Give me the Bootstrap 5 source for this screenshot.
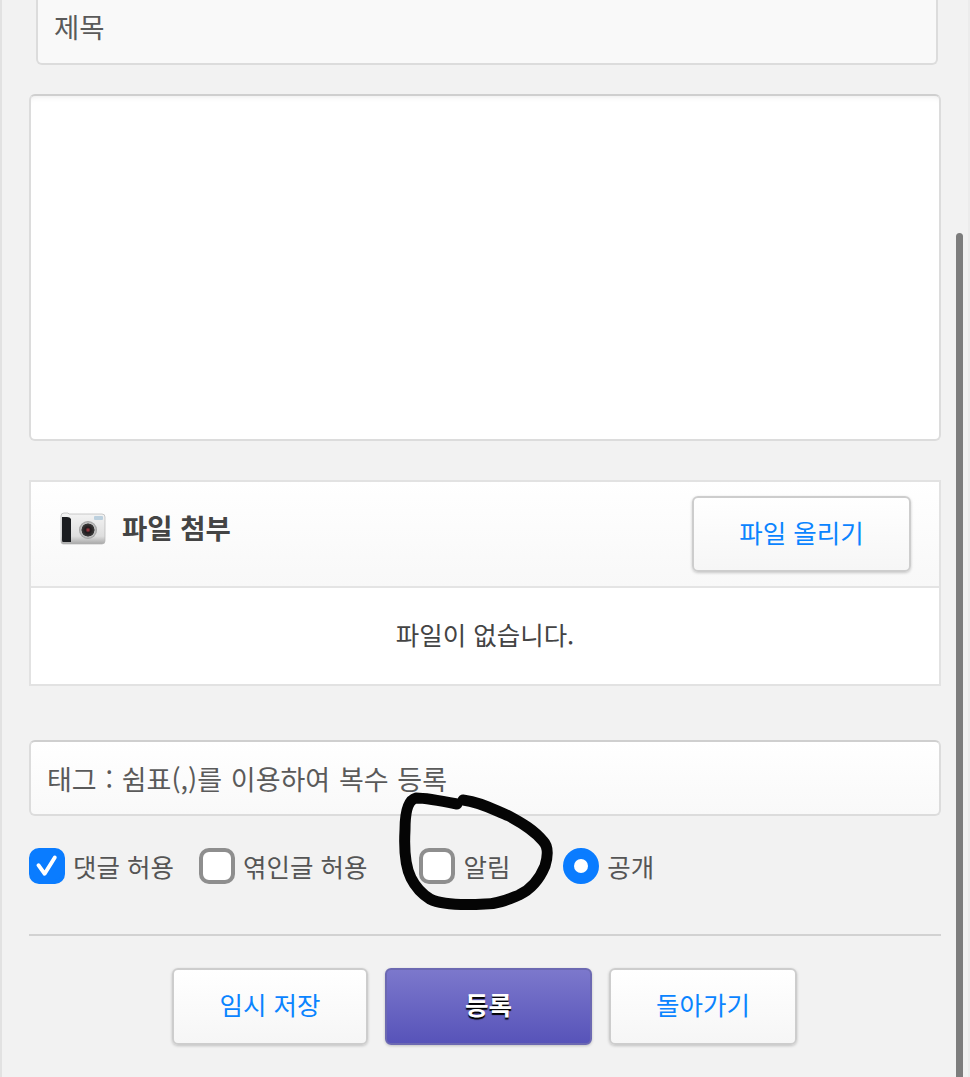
<!DOCTYPE html>
<html lang="ko">
<head>
<meta charset="utf-8">
<title>글쓰기</title>
<link rel="stylesheet" href="https://cdn.jsdelivr.net/npm/bootstrap@5.3.0/dist/css/bootstrap.min.css">
<style>
html,body{height:1077px;overflow:hidden}
body{position:relative;background:#f2f2f2;border-left:2px solid #e2e2e2;border-right:2px solid #ececec;font-family:"Noto Sans CJK KR","Liberation Sans",sans-serif;color:#555;font-size:26px}
.sheet{padding:0 27px}
.field{font-size:27px;background:linear-gradient(#fff,#f9f9f9);border:2px solid #dcdcdc;border-top-color:#cfcfcf;border-radius:6px;color:#555;box-shadow:none}
.field::placeholder{color:#5a5a5a;opacity:1}
.title-field{display:block;width:902px;height:65px;margin-left:7px;padding:0 16px 12px;font-size:27.5px;border-top:0;border-radius:0 0 6px 6px;background:#f9f9f9}
.body-field{display:block;width:912px;height:347px;margin-top:29px;background:#fff;resize:none;box-shadow:inset 0 6px 6px -6px #e6e6e6}
.file-box{width:912px;height:206px;margin-top:39px;background:#fff;border:2px solid #e2e2e2}
.file-head{height:106px;padding:14px 28px 0 29px;background:linear-gradient(#fff,#f8f8f8);border-bottom:2px solid #e4e4e4}
.file-title{font-size:27.5px;font-weight:700;color:#444;height:64px}
.file-empty{height:96px;color:#444;font-size:25.5px;padding-bottom:3px}
.tag-field{display:block;width:912px;height:76px;margin-top:54px;padding:0 16px 0;word-spacing:1.2px;background:linear-gradient(#fff,#f9f9f9)}
.opts{height:38px;margin-top:31px;font-size:25.5px;color:#555}
.opts .form-check-input{width:36px;height:36px;margin:0;float:none;border:4px solid #8e8e8e;border-radius:10px;background-color:#fff}
.opts .form-check-input:checked{background-color:#0a7cff;border-color:#0a7cff}
.opts .form-check-input[type=checkbox]:checked{background-size:100%;background-image:url("data:image/svg+xml,%3csvg xmlns='http://www.w3.org/2000/svg' viewBox='0 0 36 36'%3e%3cpath fill='none' stroke='%23fff' stroke-width='5' stroke-linecap='round' stroke-linejoin='round' d='M7 17l8 11L28 7'/%3e%3c/svg%3e")}
.opts .form-check-input[type=radio]{border-radius:50%;background-size:100%}
.opt{gap:8px}
.opt-a{margin-right:25px}.opt-b{margin-right:52px}.opt-c{margin-right:53px}
.rule{height:2px;margin:49px 0 32px;background:#d2d2d2;border:0;opacity:1;width:912px}
.acts{gap:17px;margin-left:143px}
.act{height:77px;font-size:25.5px;border-radius:6px;padding:0 0 5px;color:#0a84ff;background:linear-gradient(#fff,#f6f6f6);border:2px solid #cdcdcd;box-shadow:0 1px 3px rgba(0,0,0,.2)}
.act-save{width:196px}
.act-back{width:188px}
.act-file{width:219px;height:76px;padding-bottom:4px}
.act-send{width:207px;color:#fff;font-weight:700;background:linear-gradient(#7c78cc,#5753b9);border-color:#6c69b2;text-shadow:0 2px 1px #000}
.thumb{position:absolute;left:954px;top:233px;width:7px;height:844px;border-radius:4px 4px 0 0;background:#7d7d7d}
.ink{position:absolute;left:0;top:0;pointer-events:none}
</style>
</head>
<body>
<main class="sheet">
  <input class="form-control field title-field" type="text" placeholder="제목">
  <textarea class="form-control field body-field"></textarea>
  <section class="file-box">
    <div class="file-head d-flex justify-content-between align-items-start">
      <div class="d-flex align-items-center gap-3 file-title">
        <svg width="46" height="34" viewBox="0 0 46 34">
          <defs>
            <linearGradient id="cambody" x1="0" y1="0" x2="0" y2="1"><stop offset="0" stop-color="#f4f4f4"/><stop offset=".75" stop-color="#dedede"/><stop offset="1" stop-color="#a8a8a8"/></linearGradient>
            <radialGradient id="camlens"><stop offset="0" stop-color="#c0404a"/><stop offset=".3" stop-color="#201a1c"/><stop offset=".7" stop-color="#3a3a3a"/><stop offset=".75" stop-color="#c8c8c8"/><stop offset="1" stop-color="#9a9a9a"/></radialGradient>
          </defs>
          <path d="M4 2h4l1 1h33q3 0 3 3v24q0 3-3 3H3q-2 0-2-3V5q0-3 3-3z" fill="url(#cambody)" stroke="#b5b5b5" stroke-width=".7"/>
          <path d="M2 6h5q3 0 4 2v23H3q-1 0-1-2z" fill="#1b1d20"/>
          <circle cx="28" cy="19" r="9" fill="url(#camlens)"/>
          <rect x="34" y="5" width="9" height="4" rx="1" fill="#bcd0de"/>
        </svg>
        <span>파일 첨부</span>
      </div>
      <button type="button" class="btn act act-file">파일 올리기</button>
    </div>
    <div class="file-empty d-flex justify-content-center align-items-center">파일이 없습니다.</div>
  </section>
  <input class="form-control field tag-field" type="text" placeholder="태그 : 쉼표(,)를 이용하여 복수 등록">
  <div class="opts d-flex align-items-center">
    <label class="opt opt-a d-flex align-items-center"><input class="form-check-input" type="checkbox" checked>댓글 허용</label>
    <label class="opt opt-b d-flex align-items-center"><input class="form-check-input" type="checkbox">엮인글 허용</label>
    <label class="opt opt-c d-flex align-items-center"><input class="form-check-input" type="checkbox">알림</label>
    <label class="opt d-flex align-items-center"><input class="form-check-input" type="radio" checked>공개</label>
  </div>
  <hr class="rule">
  <div class="acts d-flex">
    <button type="button" class="btn act act-save">임시 저장</button>
    <button type="button" class="btn act act-send">등록</button>
    <button type="button" class="btn act act-back">돌아가기</button>
  </div>
</main>
<div class="thumb"></div>
<svg class="ink" width="970" height="1077" viewBox="0 0 970 1077" fill="none"><path d="M455 804C440 801 425 798 414 798C406 800 403 812 403 830C402 848 403 866 409 878C414 888 420 894 428 899C440 905 465 905 483 904C497 904 507 899 517 895C530 889 538 878 543 866C546 856 546 846 541 841C532 830 520 823 507 816C490 809 478 802 461 800" stroke="#050505" stroke-width="11" stroke-linecap="round" stroke-linejoin="round"/></svg>
<script src="https://cdn.jsdelivr.net/npm/bootstrap@5.3.0/dist/js/bootstrap.bundle.min.js"></script>
</body>
</html>
